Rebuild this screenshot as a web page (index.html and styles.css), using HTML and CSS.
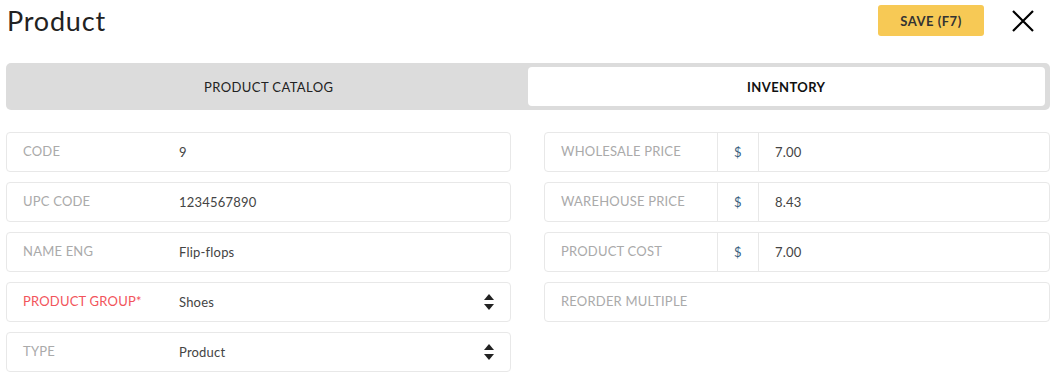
FILE: index.html
```html
<!DOCTYPE html>
<html lang="en">

<head>
    <meta charset="UTF-8">
    <title>Product</title>
    <link rel="stylesheet" href="styles.css">
</head>

<body>
    <div class="page">
        <div class="header">
            <h1>Product</h1>
            <button class="save">SAVE (F7)</button>
            <button class="close" aria-label="Close">
                <svg width="22" height="22" viewBox="0 0 22 22"><path d="M1 1L21 21M21 1L1 21" stroke="#000" stroke-width="2.2" fill="none"/></svg>
            </button>
        </div>

        <div class="tabs">
            <div class="tab">PRODUCT CATALOG</div>
            <div class="tab active">INVENTORY</div>
        </div>

        <div class="form">
            <div class="column">
                <div class="field">
                    <span class="label">CODE</span>
                    <span class="value">9</span>
                </div>
                <div class="field">
                    <span class="label">UPC CODE</span>
                    <span class="value">1234567890</span>
                </div>
                <div class="field">
                    <span class="label">NAME ENG</span>
                    <span class="value">Flip-flops</span>
                </div>
                <div class="field select">
                    <span class="label required">PRODUCT GROUP*</span>
                    <span class="value">Shoes</span>
                    <span class="arrows"></span>
                </div>
                <div class="field select">
                    <span class="label">TYPE</span>
                    <span class="value">Product</span>
                    <span class="arrows"></span>
                </div>
            </div>
            <div class="column">
                <div class="field money">
                    <span class="label">WHOLESALE PRICE</span>
                    <span class="currency">$</span>
                    <span class="value">7.00</span>
                </div>
                <div class="field money">
                    <span class="label">WAREHOUSE PRICE</span>
                    <span class="currency">$</span>
                    <span class="value">8.43</span>
                </div>
                <div class="field money">
                    <span class="label">PRODUCT COST</span>
                    <span class="currency">$</span>
                    <span class="value">7.00</span>
                </div>
                <div class="field">
                    <span class="label">REORDER MULTIPLE</span>
                </div>
            </div>
        </div>
    </div>
</body>

</html>
```

FILE: styles.css
```css
body {
    margin: 0;
    font-family: Lato, "Open Sans", sans-serif;
    background: #fff;
    color: #333;
}
.page {
    padding: 5px 6px 0 6px;
}
.header {
    display: flex;
    align-items: center;
    height: 31px;
    margin-bottom: 27px;
}
h1 {
    flex: 1;
    margin: 0 0 0 1px;
    font-size: 27px;
    font-weight: 400;
    letter-spacing: 0.8px;
    color: #222;
}
.save {
    width: 106px;
    height: 31px;
    background: #f7c955;
    border: none;
    border-radius: 3px;
    font-family: inherit;
    font-size: 13px;
    font-weight: 700;
    letter-spacing: 0.5px;
    color: #333;
    cursor: pointer;
}
.close {
    width: 22px;
    height: 22px;
    margin: 0 16px 0 28px;
    padding: 0;
    border: none;
    background: none;
    cursor: pointer;
}
.tabs {
    display: flex;
    height: 39px;
    padding: 4px 5px 4px 4px;
    background: #dcdcdc;
    border-radius: 5px;
}
.tab {
    flex: 1;
    display: flex;
    align-items: center;
    justify-content: center;
    font-size: 13px;
    letter-spacing: 0.4px;
    color: #222;
}
.tab.active {
    background: #fff;
    border-radius: 4px;
    font-weight: 700;
    color: #111;
}
.form {
    display: grid;
    grid-template-columns: 505px 1fr;
    gap: 33px;
    margin-top: 22px;
}
.column {
    display: flex;
    flex-direction: column;
    gap: 10px;
}
.field {
    display: flex;
    align-items: center;
    height: 38px;
    border: 1px solid #e8e8e8;
    border-radius: 4px;
    font-size: 13px;
}
.label {
    width: 156px;
    padding-left: 16px;
    color: #aaa;
    letter-spacing: 0.2px;
    margin-top: -2px;
}
.label.required {
    color: #f2545b;
}
.value {
    flex: 1;
    color: #444;
    letter-spacing: 0.2px;
}
.arrows {
    position: relative;
    width: 10px;
    height: 16px;
    margin-right: 16px;
}
.arrows::before,
.arrows::after {
    content: "";
    position: absolute;
    left: 0;
    border-left: 5px solid transparent;
    border-right: 5px solid transparent;
}
.arrows::before {
    top: 0;
    border-bottom: 6px solid #222;
}
.arrows::after {
    bottom: 0;
    border-top: 6px solid #222;
}
.currency {
    align-self: stretch;
    display: flex;
    align-items: center;
    width: 24px;
    padding-left: 16px;
    border-left: 1px solid #e8e8e8;
    border-right: 1px solid #e8e8e8;
    color: #3a5f80;
}
.money .value {
    padding-left: 16px;
}
```
